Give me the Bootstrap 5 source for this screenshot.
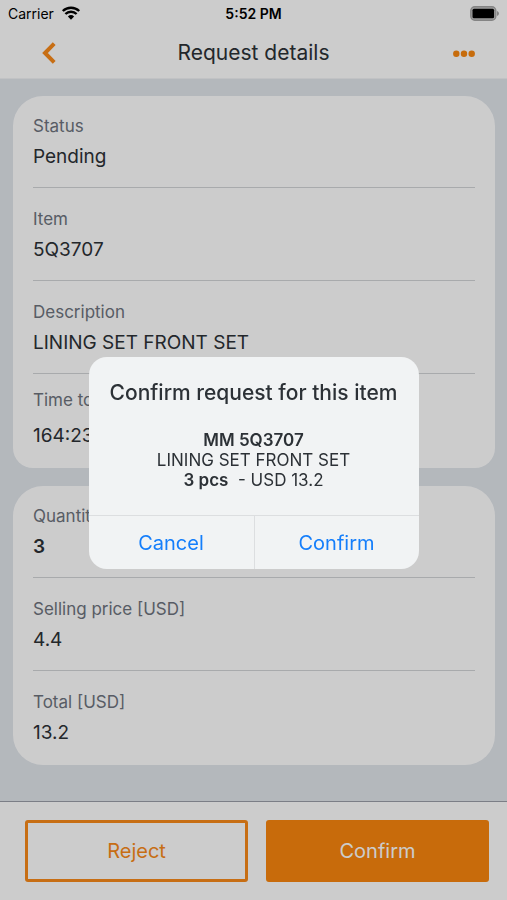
<!DOCTYPE html>
<html lang="en">
<head>
<meta charset="utf-8">
<meta name="viewport" content="width=device-width, initial-scale=1">
<title>Request details</title>
<link href="https://cdn.jsdelivr.net/npm/bootstrap@5.3.0/dist/css/bootstrap.min.css" rel="stylesheet">
<style>
  body { font-family: Inter, "Liberation Sans", sans-serif; background: #e1e6ec; color: #2c3136; }
  .status-bar { height: 27px; padding: 0 8px; font-size: 14px; line-height: 27px; color: #000; background: #fff; }
  .status-left { gap: 7px; }
  .title-bar { height: 52px; padding: 0 32px; background: #fff; border-bottom: 1px solid #f2f3f5; }
  .title-bar h1 { font-size: 21px; line-height: 50px; font-weight: 400; }
  .icon-btn { width: 34px; }
  .content { padding: 17px 12px 36px 13px; gap: 18px; }
  .panel { background: #fff; border-radius: 30px; padding: 0 20px; margin: 0; }
  .panel-timed { border-radius: 30px 30px 20px 20px; }
  .field { padding: 18px 0 12px; border-bottom: 1px solid #d3d5d8; }
  .field:first-child { padding-top: 17px; }
  .field:last-child { border-bottom: 0; padding-bottom: 14px; }
  .field dt { font-size: 17px; line-height: 26px; font-weight: 400; color: #6e747e; }
  .field dd { font-size: 19px; line-height: 36px; margin: 0; }
  .panel .field-time { padding-top: 13px; }
  .field-time dd { margin-top: 5px; }
  .actions { padding: 18px 18px 18px 25px; background: #fff; border-top: 1px solid #9a9ea8; gap: 18px; }
  .action-btn { height: 62px; font-size: 20px; border: 3px solid #f98a1a; border-radius: 3px; color: #f98a1a; background: #fff; padding: 0; }
  .action-main { background: #fa860e; border-color: #fa860e; color: #fff; }
  .dim { background: rgba(0, 0, 0, .2); padding-top: 26px; }
  .dim .modal-dialog { max-width: 330px; margin: 0 auto; min-height: 100%; }
  .alert-box { background: #f1f3f4; border: 0; border-radius: 18px; overflow: hidden; color: #2c3136; }
  .alert-text { padding: 22px 12px 25px; }
  .alert-text h2 { font-size: 21px; line-height: 28px; font-weight: 500; margin-bottom: 23px; }
  .alert-text p { font-size: 17px; line-height: 20px; }
  .alert-text strong { font-weight: 600; }
  .alert-actions { border-top: 1px solid #dcdee0; }
  .alert-btn { height: 53px; font-size: 20px; color: #147efb; border: 0; background: none; padding: 0; }
  .alert-btn + .alert-btn { border-left: 1px solid #dcdee0; }
</style>
</head>
<body>
<div class="d-flex flex-column min-vh-100">
  <header>
    <div class="status-bar d-flex align-items-center">
      <div class="status-left col d-flex align-items-center">
        <span>Carrier</span>
        <svg width="20" height="15" viewBox="0 0 20 15" aria-hidden="true"><path d="M10 13.800 6.900 10.500A4.600 4.600 0 0 1 13.100 10.500Z" fill="#000"/><path d="M4.400 8a8 8 0 0 1 11.200 0M1.800 5a11.800 11.800 0 0 1 16.400 0" fill="none" stroke="#000" stroke-width="2.400"/></svg>
      </div>
      <div class="fw-semibold">5:52 PM</div>
      <div class="col d-flex justify-content-end">
        <svg width="29" height="15" viewBox="0 0 29 15" role="img" aria-label="Battery full"><rect x=".8" y=".8" width="25" height="13.400" rx="4" fill="#c8c8c8" stroke="#a5a5a5" stroke-width="1.400"/><rect x="2.500" y="2.800" width="21.600" height="9.400" rx="1.500" fill="#000"/><path d="M27 5v5q2-.8 2-2.500t-2-2.500Z" fill="#a5a5a5"/></svg>
      </div>
    </div>
    <nav class="title-bar d-flex align-items-center" aria-label="Page">
      <div class="col">
        <button type="button" class="icon-btn btn border-0 p-0 d-flex justify-content-center" aria-label="Back">
          <svg width="14" height="22" viewBox="0 0 14 22" fill="none" stroke="#f98a1a" stroke-width="4"><path d="M12.200 1.700 3 11l9.200 9.300"/></svg>
        </button>
      </div>
      <h1 class="m-0">Request details</h1>
      <div class="col d-flex justify-content-end">
        <button type="button" class="icon-btn btn border-0 p-0 d-flex justify-content-end" aria-label="More">
          <svg width="22" height="8" viewBox="0 0 22 8" fill="#f9870f"><circle cx="3.300" cy="4.700" r="3.200"/><circle cx="11" cy="4.700" r="3.200"/><circle cx="18.700" cy="4.700" r="3.200"/></svg>
        </button>
      </div>
    </nav>
  </header>

  <main class="content flex-grow-1 d-flex flex-column">
    <dl class="panel panel-timed">
      <div class="field"><dt>Status</dt><dd>Pending</dd></div>
      <div class="field"><dt>Item</dt><dd>5Q3707</dd></div>
      <div class="field"><dt>Description</dt><dd>LINING SET FRONT SET</dd></div>
      <div class="field field-time"><dt>Time to</dt><dd>164:23</dd></div>
    </dl>
    <dl class="panel">
      <div class="field"><dt>Quantity</dt><dd class="fw-semibold">3</dd></div>
      <div class="field"><dt>Selling price [USD]</dt><dd>4.4</dd></div>
      <div class="field"><dt>Total [USD]</dt><dd>13.2</dd></div>
    </dl>
  </main>

  <footer class="actions d-flex">
    <button type="button" class="btn action-btn flex-fill w-50">Reject</button>
    <button type="button" class="btn action-btn action-main flex-fill w-50">Confirm</button>
  </footer>
</div>

<div class="modal show d-block dim" role="dialog" aria-modal="true" aria-labelledby="alert-title">
  <div class="modal-dialog modal-dialog-centered">
    <div class="modal-content alert-box">
      <div class="alert-text text-center">
        <h2 id="alert-title">Confirm request for this item</h2>
        <p class="m-0"><strong>MM 5Q3707</strong><br>LINING SET FRONT SET<br><strong>3 pcs</strong>&nbsp; - USD 13.2</p>
      </div>
      <div class="alert-actions d-flex">
        <button type="button" class="btn rounded-0 alert-btn w-50">Cancel</button>
        <button type="button" class="btn rounded-0 alert-btn w-50">Confirm</button>
      </div>
    </div>
  </div>
</div>
<script src="https://cdn.jsdelivr.net/npm/bootstrap@5.3.0/dist/js/bootstrap.bundle.min.js"></script>
</body>
</html>
